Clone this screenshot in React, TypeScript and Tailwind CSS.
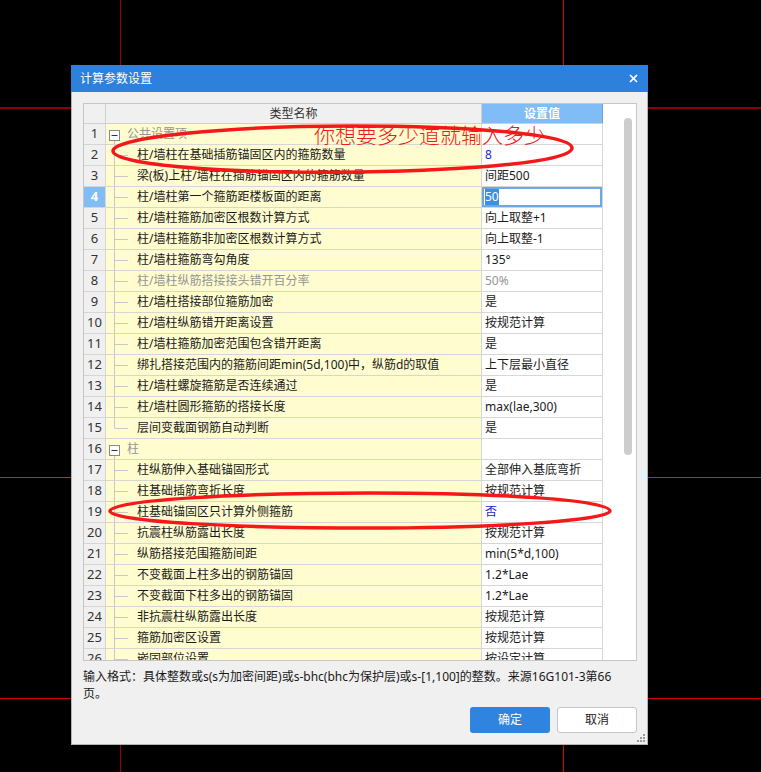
import React from "react";

type Row = {
  n: number;
  group?: boolean;
  name: string;
  v?: string;
  vc?: "blue" | "grey";
  grey?: boolean;
  sel?: boolean;
  last?: boolean;
};

const rows: Row[] = [
  { n: 1, group: true, name: "公共设置项" },
  { n: 2, name: "柱/墙柱在基础插筋锚固区内的箍筋数量", v: "8", vc: "blue" },
  { n: 3, name: "梁(板)上柱/墙柱在插筋锚固区内的箍筋数量", v: "间距500" },
  { n: 4, name: "柱/墙柱第一个箍筋距楼板面的距离", v: "50", sel: true },
  { n: 5, name: "柱/墙柱箍筋加密区根数计算方式", v: "向上取整+1" },
  { n: 6, name: "柱/墙柱箍筋非加密区根数计算方式", v: "向上取整-1" },
  { n: 7, name: "柱/墙柱箍筋弯勾角度", v: "135°" },
  { n: 8, name: "柱/墙柱纵筋搭接接头错开百分率", v: "50%", vc: "grey", grey: true },
  { n: 9, name: "柱/墙柱搭接部位箍筋加密", v: "是" },
  { n: 10, name: "柱/墙柱纵筋错开距离设置", v: "按规范计算" },
  { n: 11, name: "柱/墙柱箍筋加密范围包含错开距离", v: "是" },
  { n: 12, name: "绑扎搭接范围内的箍筋间距min(5d,100)中，纵筋d的取值", v: "上下层最小直径" },
  { n: 13, name: "柱/墙柱螺旋箍筋是否连续通过", v: "是" },
  { n: 14, name: "柱/墙柱圆形箍筋的搭接长度", v: "max(lae,300)" },
  { n: 15, name: "层间变截面钢筋自动判断", v: "是", last: true },
  { n: 16, group: true, name: "柱" },
  { n: 17, name: "柱纵筋伸入基础锚固形式", v: "全部伸入基底弯折" },
  { n: 18, name: "柱基础插筋弯折长度", v: "按规范计算" },
  { n: 19, name: "柱基础锚固区只计算外侧箍筋", v: "否", vc: "blue" },
  { n: 20, name: "抗震柱纵筋露出长度", v: "按规范计算" },
  { n: 21, name: "纵筋搭接范围箍筋间距", v: "min(5*d,100)" },
  { n: 22, name: "不变截面上柱多出的钢筋锚固", v: "1.2*Lae" },
  { n: 23, name: "不变截面下柱多出的钢筋锚固", v: "1.2*Lae" },
  { n: 24, name: "非抗震柱纵筋露出长度", v: "按规范计算" },
  { n: 25, name: "箍筋加密区设置", v: "按规范计算" },
  { n: 26, name: "嵌固部位设置", v: "按设定计算" },
];

const FONT = { fontFamily: '"Noto Sans", "Noto Sans CJK SC", sans-serif' };

function GroupIcon() {
  return (
    <svg width="21" height="20" className="shrink-0">
      <line x1="8.5" y1="16" x2="8.5" y2="20" stroke="#c4c4c4" />
      <rect x="3.5" y="6.5" width="10" height="10" fill="#fff" stroke="#8a8a8a" />
      <line x1="5.5" y1="11.5" x2="11.5" y2="11.5" stroke="#333" />
    </svg>
  );
}

function ChildIcon({ last }: { last?: boolean }) {
  return (
    <svg width="31" height="20" className="shrink-0">
      <line x1="8.5" y1="0" x2="8.5" y2={last ? 10.5 : 20} stroke="#c8c8c8" />
      <line x1="8.5" y1="10.5" x2="22" y2="10.5" stroke="#c8c8c8" />
    </svg>
  );
}

function TableRow({ r }: { r: Row }) {
  return (
    <div className="flex h-[21px] shrink-0 border-b border-[#d6d6d6]">
      <div
        className={
          r.sel
            ? "w-[22px] shrink-0 border-r border-[#d6d6d6] bg-[#80bcf6] text-white font-bold flex items-center justify-center text-[13px]"
            : "w-[22px] shrink-0 border-r border-[#d6d6d6] bg-[#f0f0f0] text-[#333] flex items-center justify-center text-[13px]"
        }
      >
        {r.n}
      </div>
      <div className="w-[376px] shrink-0 border-r border-[#d6d6d6] bg-[#fffdd0] flex items-center text-[12px] whitespace-nowrap overflow-hidden">
        {r.group ? <GroupIcon /> : <ChildIcon last={r.last} />}
        <span className={r.group || r.grey ? "text-[#959595]" : "text-[#1a1a1a]"}>{r.name}</span>
      </div>
      <div
        className={
          r.sel
            ? "w-[121px] shrink-0 border-r border-[#d6d6d6] bg-white flex items-center pl-[3px] text-[12px] whitespace-nowrap shadow-[inset_0_0_0_2px_#6ea8e4]"
            : "w-[121px] shrink-0 border-r border-[#d6d6d6] bg-white flex items-center pl-[3px] text-[12px] whitespace-nowrap"
        }
      >
        {r.sel ? (
          <span className="bg-[#3990e6] text-white leading-[16px]">{r.v}</span>
        ) : (
          <span
            className={
              r.vc === "blue" ? "text-[#2222dd]" : r.vc === "grey" ? "text-[#959595]" : "text-[#1a1a1a]"
            }
          >
            {r.v}
          </span>
        )}
      </div>
    </div>
  );
}

export default function App() {
  return (
    <div className="relative w-[761px] h-[772px] bg-black overflow-hidden pt-[65px] pl-[71px]" style={FONT}>
      {/* crosshair guide lines on the canvas */}
      <div className="absolute left-[120px] top-0 h-full w-px bg-[#9c0000]" />
      <div className="absolute left-[563px] top-0 h-full w-px bg-[#e00000]" />
      <div className="absolute left-0 top-[107px] w-full h-[2px] bg-[#8b0000]" />
      <div className="absolute left-0 top-[477px] w-full h-px bg-[#ff1010]" />
      <div className="absolute left-0 top-[698px] w-full h-px bg-[#e00000]" />

      {/* dialog window */}
      <div className="relative z-10 w-[577px] h-[680px] flex flex-col">
        <div className="h-[27px] shrink-0 bg-[#2e80dd] flex items-center justify-between pl-[9px] pr-[10px]">
          <span className="text-white text-[12px]">计算参数设置</span>
          <svg width="9" height="9" viewBox="0 0 9 9">
            <line x1="1" y1="1" x2="8" y2="8" stroke="#fff" strokeWidth="1.7" />
            <line x1="8" y1="1" x2="1" y2="8" stroke="#fff" strokeWidth="1.7" />
          </svg>
        </div>
        <div className="relative flex-1 flex flex-col bg-[#f0f0f0] border-x border-b border-[#b4b4b4] pl-[11px] pr-[10px] pt-[11px]">
          {/* table */}
          <div className="h-[558px] w-[554px] shrink-0 border border-[#c6c6c6] flex overflow-hidden">
            <div className="flex flex-col w-[519px] shrink-0 overflow-hidden">
              <div className="flex h-[20px] shrink-0 border-b border-[#d0d0d0]">
                <div className="w-[22px] shrink-0 border-r border-[#d0d0d0] bg-[#f0f0f0]" />
                <div className="w-[376px] shrink-0 border-r border-[#d0d0d0] bg-[#f0f0f0] flex items-center justify-center text-[12px] text-[#333]">
                  类型名称
                </div>
                <div className="w-[121px] shrink-0 border-r border-[#5fa3ea] bg-[#80bcf6] flex items-center justify-center text-[12px] text-white font-bold">
                  设置值
                </div>
              </div>
              {rows.map((r) => (
                <TableRow key={r.n} r={r} />
              ))}
            </div>
            <div className="flex-1 bg-white pt-[14px] pl-[21px]">
              <div className="w-[8px] h-[337px] rounded-full bg-[#cdcdcd]" />
            </div>
          </div>

          {/* hint text */}
          <div className="mt-[7px] text-[12px] leading-[17px] text-[#1a1a1a] whitespace-nowrap">
            输入格式：具体整数或s(s为加密间距)或s-bhc(bhc为保护层)或s-[1,100]的整数。来源16G101-3第66
            <br />
            页。
          </div>

          {/* buttons */}
          <div className="mt-[5px] flex justify-end gap-[7px] w-[554px]">
            <button className="w-[80px] h-[26px] rounded-[3px] bg-[#2f84e0] text-white text-[12px]">确定</button>
            <button className="w-[80px] h-[26px] rounded-[3px] bg-white border border-[#c6c6c6] text-[#1a1a1a] text-[12px]">
              取消
            </button>
          </div>

          {/* resize grip */}
          <svg width="8" height="8" className="absolute right-[2px] bottom-[2px]">
            <rect x="6" y="0" width="2" height="2" fill="#9a9a9a" />
            <rect x="3" y="3" width="2" height="2" fill="#9a9a9a" />
            <rect x="6" y="3" width="2" height="2" fill="#9a9a9a" />
            <rect x="0" y="6" width="2" height="2" fill="#9a9a9a" />
            <rect x="3" y="6" width="2" height="2" fill="#9a9a9a" />
            <rect x="6" y="6" width="2" height="2" fill="#9a9a9a" />
          </svg>
        </div>
      </div>

      {/* red annotations */}
      <svg className="absolute left-0 top-0 z-20 pointer-events-none" width="761" height="772">
        <path
          d="M113,151 C113,137 230,126 350,126 C470,126 572,134 572,148 C572,162 470,170 360,172 C230,174 113,165 113,151 Z"
          fill="none"
          stroke="#f51818"
          strokeWidth="3.5"
        />
        <path
          d="M110,511 C110,500 240,493 370,493 C500,493 610,500 610,511 C610,520 500,528 370,528 C240,528 110,522 110,511 Z"
          fill="none"
          stroke="#f51818"
          strokeWidth="3.5"
        />
      </svg>
      <div className="absolute z-30 left-[314px] top-[125px] text-[21px] leading-none font-light text-[#f01818] whitespace-nowrap">
        你想要多少道就输入多少
      </div>
    </div>
  );
}
